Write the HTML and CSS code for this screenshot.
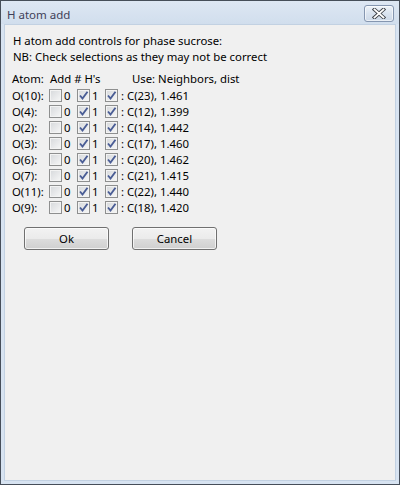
FILE: index.html
```html
<!DOCTYPE html>
<html>
<head>
<meta charset="utf-8">
<link rel="stylesheet" href="styles.css">
</head>
<body>
<div class="window">
  <div class="titlebar">
    <span class="title">H atom add</span>
    <div class="close">
      <svg width="14" height="11" viewBox="0 0 14 11">
        <path d="M2.5 1.5 L11.5 9.5 M11.5 1.5 L2.5 9.5" stroke="#3b3f46" stroke-width="3.6" stroke-linecap="square"/>
        <path d="M2.5 1.5 L11.5 9.5 M11.5 1.5 L2.5 9.5" stroke="#ffffff" stroke-width="1.8" stroke-linecap="square"/>
      </svg>
    </div>
  </div>
  <div class="content">
    <div class="intro">
      <div class="line">H atom add controls for phase sucrose:</div>
      <div class="line">NB: Check selections as they may not be correct</div>
    </div>
    <div class="header">
      <span class="h-atom">Atom:</span>
      <span class="h-add">Add # H's</span>
      <span class="h-use">Use: Neighbors, dist</span>
    </div>
    <div class="rows">
      <div class="row"><span class="lab">O(10):</span><span class="cb"></span><span class="num">0</span><span class="cb on"><svg viewBox="0 0 11 11"><path d="M2 5.5 L4.5 8.5 L9.5 1.8"/></svg></span><span class="num">1</span><span class="cb on"><svg viewBox="0 0 11 11"><path d="M2 5.5 L4.5 8.5 L9.5 1.8"/></svg></span><span class="nb">: C(23), 1.461</span></div>
      <div class="row"><span class="lab">O(4):</span><span class="cb"></span><span class="num">0</span><span class="cb on"><svg viewBox="0 0 11 11"><path d="M2 5.5 L4.5 8.5 L9.5 1.8"/></svg></span><span class="num">1</span><span class="cb on"><svg viewBox="0 0 11 11"><path d="M2 5.5 L4.5 8.5 L9.5 1.8"/></svg></span><span class="nb">: C(12), 1.399</span></div>
      <div class="row"><span class="lab">O(2):</span><span class="cb"></span><span class="num">0</span><span class="cb on"><svg viewBox="0 0 11 11"><path d="M2 5.5 L4.5 8.5 L9.5 1.8"/></svg></span><span class="num">1</span><span class="cb on"><svg viewBox="0 0 11 11"><path d="M2 5.5 L4.5 8.5 L9.5 1.8"/></svg></span><span class="nb">: C(14), 1.442</span></div>
      <div class="row"><span class="lab">O(3):</span><span class="cb"></span><span class="num">0</span><span class="cb on"><svg viewBox="0 0 11 11"><path d="M2 5.5 L4.5 8.5 L9.5 1.8"/></svg></span><span class="num">1</span><span class="cb on"><svg viewBox="0 0 11 11"><path d="M2 5.5 L4.5 8.5 L9.5 1.8"/></svg></span><span class="nb">: C(17), 1.460</span></div>
      <div class="row"><span class="lab">O(6):</span><span class="cb"></span><span class="num">0</span><span class="cb on"><svg viewBox="0 0 11 11"><path d="M2 5.5 L4.5 8.5 L9.5 1.8"/></svg></span><span class="num">1</span><span class="cb on"><svg viewBox="0 0 11 11"><path d="M2 5.5 L4.5 8.5 L9.5 1.8"/></svg></span><span class="nb">: C(20), 1.462</span></div>
      <div class="row"><span class="lab">O(7):</span><span class="cb"></span><span class="num">0</span><span class="cb on"><svg viewBox="0 0 11 11"><path d="M2 5.5 L4.5 8.5 L9.5 1.8"/></svg></span><span class="num">1</span><span class="cb on"><svg viewBox="0 0 11 11"><path d="M2 5.5 L4.5 8.5 L9.5 1.8"/></svg></span><span class="nb">: C(21), 1.415</span></div>
      <div class="row"><span class="lab">O(11):</span><span class="cb"></span><span class="num">0</span><span class="cb on"><svg viewBox="0 0 11 11"><path d="M2 5.5 L4.5 8.5 L9.5 1.8"/></svg></span><span class="num">1</span><span class="cb on"><svg viewBox="0 0 11 11"><path d="M2 5.5 L4.5 8.5 L9.5 1.8"/></svg></span><span class="nb">: C(22), 1.440</span></div>
      <div class="row"><span class="lab">O(9):</span><span class="cb"></span><span class="num">0</span><span class="cb on"><svg viewBox="0 0 11 11"><path d="M2 5.5 L4.5 8.5 L9.5 1.8"/></svg></span><span class="num">1</span><span class="cb on"><svg viewBox="0 0 11 11"><path d="M2 5.5 L4.5 8.5 L9.5 1.8"/></svg></span><span class="nb">: C(18), 1.420</span></div>
    </div>
    <div class="buttons">
      <div class="btn">Ok</div>
      <div class="btn">Cancel</div>
    </div>
  </div>
</div>
</body>
</html>
```
FILE: styles.css
```css
* { box-sizing: border-box; }
html, body { margin: 0; padding: 0; }
body {
  width: 400px;
  height: 485px;
  font-family: "Noto Sans", "Open Sans", sans-serif;
  font-size: 11.35px;
  color: #000;
  background: #f0f0f0;
}
.window {
  width: 400px;
  height: 485px;
  border: 1px solid #464e59;
  background: #d7e3f1;
  padding: 0 3px 3px 3px;
  display: flex;
  flex-direction: column;
}
.titlebar {
  height: 23px;
  display: flex;
  align-items: flex-start;
  justify-content: space-between;
  background: linear-gradient(#dde7f3, #d1deed);
  margin: 0 -3px;
  padding: 0 5px 0 6px;
}
.title {
  font-size: 11.5px;
  line-height: 16px;
  margin-top: 6px;
  color: #3f3f58;
}
.close {
  width: 30px;
  height: 17px;
  margin-top: 4px;
  border: 1px solid #8596b0;
  border-radius: 3px;
  background: linear-gradient(#eef3f9, #d9e3ef 50%, #cdd9e8);
  box-shadow: inset 0 0 0 1px rgba(255,255,255,0.6);
  display: flex;
  align-items: center;
  justify-content: center;
}
.close svg { display: block; }
.content {
  flex: 1;
  background: #f0f0f0;
  border: 1px solid #c2d1e2;
  padding: 8px 0 0 8px;
}
.line { line-height: 16px; white-space: nowrap; }
.header {
  margin-top: 6px;
  line-height: 16px;
  display: flex;
  margin-left: -1px;
  white-space: nowrap;
}
.h-atom { width: 38px; }
.h-add { width: 82px; }
.rows { margin-top: 1px; margin-left: -1px; }
.row {
  display: flex;
  align-items: flex-start;
  height: 16px;
  line-height: 16px;
  white-space: nowrap;
}
.lab { width: 37px; }
.cb {
  width: 13px;
  height: 13px;
  margin-top: 1px;
  border: 1px solid #8e8f8f;
  background: linear-gradient(135deg, #d6d8db, #f7f7f7);
  box-shadow: inset 0 0 0 1px #f3f3f3;
  display: flex;
  align-items: center;
  justify-content: center;
}
.cb svg {
  width: 11px;
  height: 11px;
  display: block;
}
.cb svg path {
  fill: none;
  stroke: #4a5d95;
  stroke-width: 1.9;
}
.num { width: 15px; padding-left: 2px; }
.nb { padding-left: 3px; }
.buttons {
  display: flex;
  gap: 23px;
  margin-top: 11px;
  padding-left: 11px;
}
.btn {
  width: 85px;
  height: 23px;
  border: 1px solid #707070;
  border-radius: 3px;
  background: linear-gradient(#f2f2f2, #ebebeb 50%, #dddddd 51%, #cfcfcf);
  box-shadow: inset 0 0 0 1px rgba(255,255,255,0.7);
  display: flex;
  align-items: center;
  justify-content: center;
  line-height: 16px;
}
```
